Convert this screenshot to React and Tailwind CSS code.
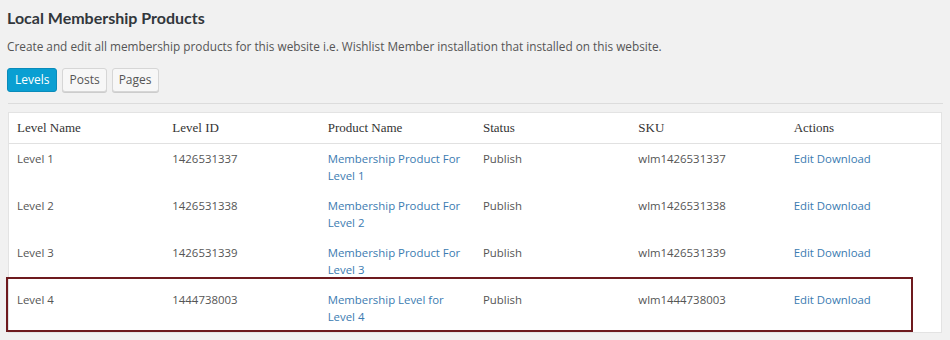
import React from 'react';

const rows = [
  { name: 'Level 1', id: '1426531337', product: ['Membership Product For', 'Level 1'], status: 'Publish', sku: 'wlm1426531337' },
  { name: 'Level 2', id: '1426531338', product: ['Membership Product For', 'Level 2'], status: 'Publish', sku: 'wlm1426531338' },
  { name: 'Level 3', id: '1426531339', product: ['Membership Product For', 'Level 3'], status: 'Publish', sku: 'wlm1426531339' },
  { name: 'Level 4', id: '1444738003', product: ['Membership Level for', 'Level 4'], status: 'Publish', sku: 'wlm1444738003' },
];

const headers = ['Level Name', 'Level ID', 'Product Name', 'Status', 'SKU', 'Actions'];

const App = () => {
  return (
    <div className="w-[950px] h-[340px] overflow-hidden bg-[#f1f1f1] text-[12px] text-[#555] font-['Open_Sans',sans-serif]">
      <div className="pl-[7px] pt-[8px]">
        <h2 className="text-[16px] font-bold font-['Lato',sans-serif] text-[#32373c] leading-[20px]">Local Membership Products</h2>
        <p className="mt-[10px] text-[11.8px] leading-[17px] whitespace-nowrap">
          Create and edit all membership products for this website i.e. Wishlist Member installation that installed on this website.
        </p>
        {/* tabs */}
        <div className="flex gap-[5px] mt-[13px]">
          <button className="h-[24px] px-[7px] rounded-[3px] bg-[#0a9fd2] text-white text-[12px] leading-[22px] border border-[#0a8bba]">Levels</button>
          <button className="h-[24px] px-[6px] rounded-[3px] bg-[#f7f7f7] text-[#555] text-[12px] leading-[22px] border border-[#d6d6d6] shadow-[0_1px_0_#ccc]">Posts</button>
          <button className="h-[24px] px-[6px] rounded-[3px] bg-[#f7f7f7] text-[#555] text-[12px] leading-[22px] border border-[#d6d6d6] shadow-[0_1px_0_#ccc]">Pages</button>
        </div>
      </div>
      <div className="ml-[8px] w-[935px] mt-[11px] border-t border-[#dcdcdc]" />

      {/* table */}
      <div className="relative ml-[8px] mt-[8px] w-[934px] bg-white border border-[#e3e3e3]">
        <table className="w-full table-fixed border-collapse">
          <thead>
            <tr className="border-b border-[#e1e1e1]">
              {headers.map((h) => (
                <th key={h} className="text-left font-normal font-['Liberation_Serif',serif] text-[13px] text-[#333] pl-[8px] h-[30px]">
                  {h}
                </th>
              ))}
            </tr>
          </thead>
          <tbody className="text-[11.4px]">
            {rows.map((r, i) => (
              <tr key={r.id} className="align-top">
                <td className={`pl-[8px] pt-[6px] leading-[17px] ${i === 0 ? 'h-[48px]' : 'h-[47px]'}`}>{r.name}</td>
                <td className="pl-[8px] pt-[6px] leading-[17px]">{r.id}</td>
                <td className="pl-[8px] pt-[6px] leading-[17px] text-[#3b7bb1]">
                  {r.product[0]}
                  <br />
                  {r.product[1]}
                </td>
                <td className="pl-[8px] pt-[6px] leading-[17px]">{r.status}</td>
                <td className="pl-[8px] pt-[6px] leading-[17px]">{r.sku}</td>
                <td className="pl-[8px] pt-[6px] leading-[17px] text-[#3b7bb1]">Edit Download</td>
              </tr>
            ))}
          </tbody>
        </table>
        {/* highlight annotation */}
        <div className="absolute left-[-3px] top-[164px] w-[907px] h-[55px] border-2 border-[#6e1a1e] pointer-events-none" />
      </div>
    </div>
  );
};

export default App;
